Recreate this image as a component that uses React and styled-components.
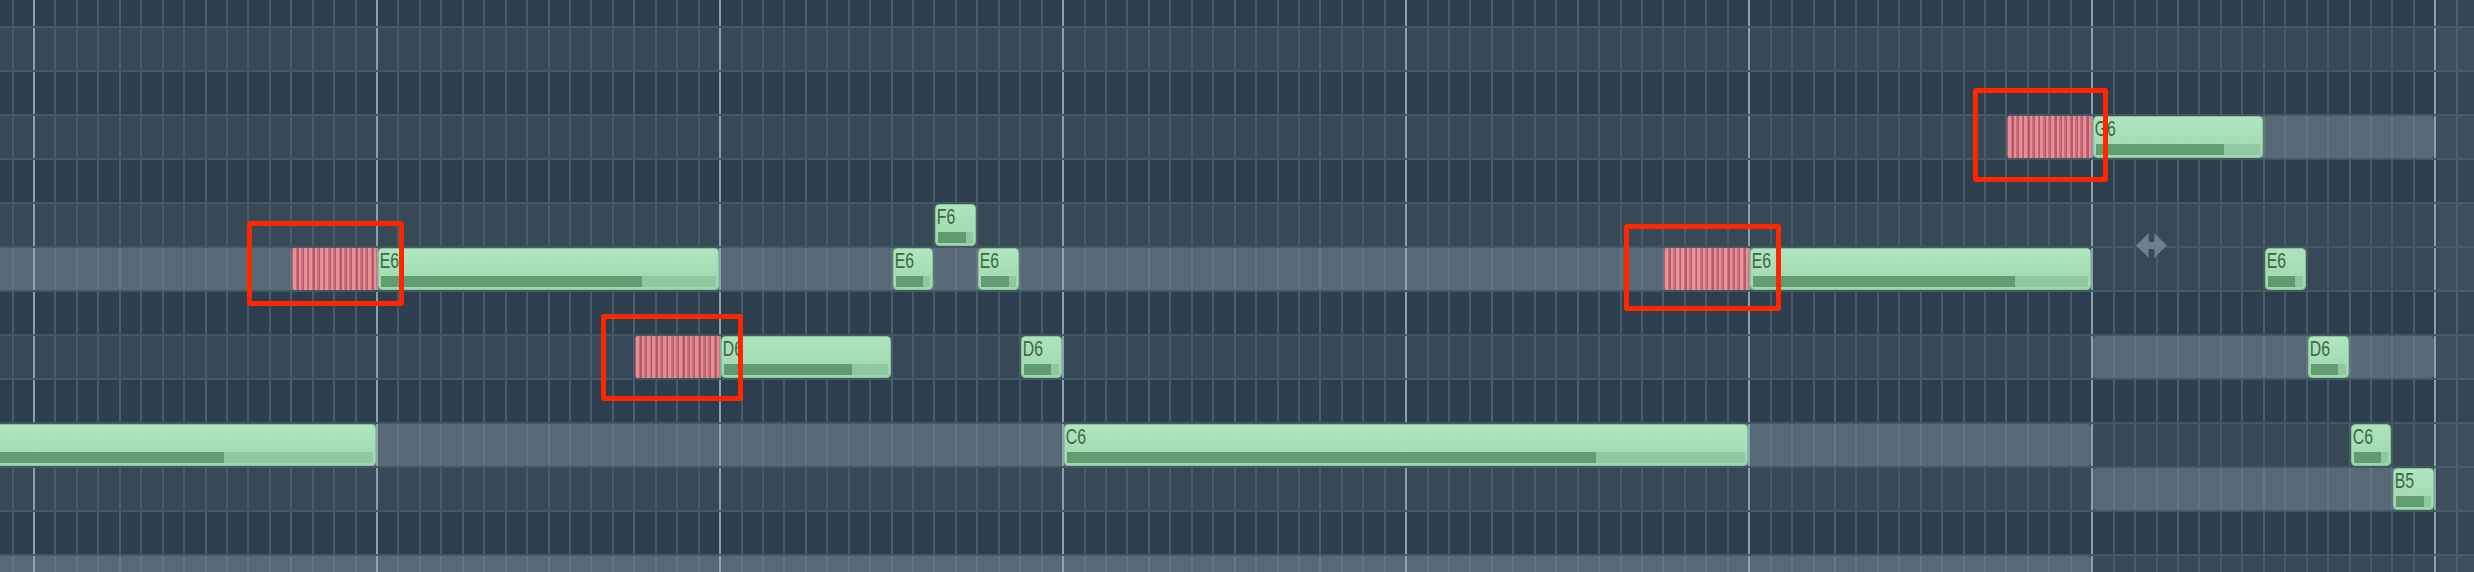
import React from "react";
import styled, { createGlobalStyle } from "styled-components";

// piano roll geometry (px)
const STEP = 21.44;
const ORIGIN = 34; // first bar line
const ROW_H = 44;
const FIRST_ROW = -18;
const PATTERN_END = 112; // in steps

const xAt = (s) => ORIGIN + s * STEP;

const ROWS = [
  { name: "A#6", black: true },
  { name: "A6" },
  { name: "G#6", black: true },
  { name: "G6" },
  { name: "F#6", black: true },
  { name: "F6" },
  { name: "E6" },
  { name: "D#6", black: true },
  { name: "D6" },
  { name: "C#6", black: true },
  { name: "C6" },
  { name: "B5" },
  { name: "A#5", black: true },
  { name: "A5" },
];

const NOTES = [
  { key: "C6", from: -16, len: 32 },
  { key: "E6", from: 16, len: 16 },
  { key: "D6", from: 32, len: 8 },
  { key: "E6", from: 40, len: 2 },
  { key: "F6", from: 42, len: 2 },
  { key: "E6", from: 44, len: 2 },
  { key: "D6", from: 46, len: 2 },
  { key: "C6", from: 48, len: 32 },
  { key: "E6", from: 80, len: 16 },
  { key: "G6", from: 96, len: 8 },
  { key: "E6", from: 104, len: 2 },
  { key: "D6", from: 106, len: 2 },
  { key: "C6", from: 108, len: 2 },
  { key: "B5", from: 110, len: 2 },
];

const GHOSTS = [
  { key: "E6", from: -16, to: 96 },
  { key: "C6", from: -16, to: 96 },
  { key: "A5", from: -16, to: 96 },
  { key: "G6", from: 96, to: 112 },
  { key: "D6", from: 96, to: 112 },
  { key: "B5", from: 96, to: 112 },
];

const SLIDES = [
  { key: "E6", from: 12 },
  { key: "D6", from: 28 },
  { key: "E6", from: 76 },
  { key: "G6", from: 92 },
];

// annotation boxes drawn over the roll
const MARKS = [
  { x: 247, y: 221, w: 157, h: 85 },
  { x: 601, y: 314, w: 142, h: 87 },
  { x: 1624, y: 224, w: 157, h: 87 },
  { x: 1973, y: 88, w: 135, h: 94 },
];

const GlobalStyle = createGlobalStyle`
  html, body {
    margin: 0;
    padding: 0;
    background: #2e404f;
    overflow: hidden;
  }
  #root {
    height: 572px;
  }
`;

const Roll = styled.div`
  position: relative;
  width: 2474px;
  height: 572px;
  overflow: hidden;
`;

const Keys = styled.div`
  display: flex;
  flex-direction: column;
  margin-top: ${FIRST_ROW}px;
`;

const Row = styled.div`
  position: relative;
  box-sizing: border-box;
  height: ${ROW_H}px;
  border-top: 2px solid #445765;
  background-color: ${(p) => (p.$black ? "#2d3f4e" : "#374957")};
  background-image:
    repeating-linear-gradient(to right, transparent 0 33px, #8ca1b0 33px 35px, transparent 35px 343.04px),
    repeating-linear-gradient(to right, transparent 0 33px, #53677540 33px 35px, transparent 35px 85.76px),
    repeating-linear-gradient(to right, transparent 0 11.56px, #485b69 11.56px 13.56px, transparent 13.56px 21.44px);
`;

const OutOfPattern = styled.div`
  position: absolute;
  top: 0;
  bottom: 0;
  left: ${xAt(PATTERN_END) + 2}px;
  right: 0;
  background: rgba(255, 255, 255, 0.035);
`;

const Ghost = styled.div`
  position: absolute;
  top: 0;
  bottom: 0;
  border-radius: 4px;
  background: rgba(152, 168, 178, 0.34);
`;

const Note = styled.div`
  position: absolute;
  top: 0;
  bottom: 0;
  box-sizing: border-box;
  border: 1px solid #8acb99;
  border-radius: 4px;
  background: linear-gradient(#b4edc4, #a3deb3);
  opacity: 0.95;
  overflow: hidden;
`;

const Label = styled.span`
  display: block;
  padding: 1px 0 0 1px;
  font-family: "Liberation Sans", Arial, sans-serif;
  font-size: 22px;
  line-height: 1;
  color: #42683e;
  transform: scaleX(0.72);
  transform-origin: left top;
  white-space: nowrap;
`;

const Velocity = styled.div`
  position: absolute;
  left: 2px;
  right: 2px;
  bottom: 2px;
  height: 11px;
  background: #94cfa3;
`;

const VelocityFill = styled.div`
  height: 100%;
  background: #63a071;
`;

const Slide = styled.div`
  position: absolute;
  top: 0;
  bottom: 0;
  border-radius: 3px;
  opacity: 0.92;
  background: repeating-linear-gradient(
    to right,
    #c05a67 0 1.3px,
    #f3959e 1.3px 3.8px,
    #d2717c 3.8px 5.36px
  );
`;

const Mark = styled.div`
  position: absolute;
  box-sizing: border-box;
  border: 5px solid #ff2600;
  border-radius: 3px;
`;

const Cursor = styled.svg`
  position: absolute;
  left: 2136px;
  top: 233px;
`;

const span = (from, to, inset = 2) => ({
  left: xAt(from) + 1,
  width: (to - from) * STEP - inset,
});

const App = () => {
  return (
    <>
      <GlobalStyle />
      <Roll>
        <Keys>
          {ROWS.map((r) => (
            <Row key={r.name} $black={r.black}>
              {GHOSTS.filter((g) => g.key === r.name).map((g, i) => (
                <Ghost key={"g" + i} style={span(g.from, g.to)} />
              ))}
              {SLIDES.filter((s) => s.key === r.name).map((s, i) => (
                <Slide key={"s" + i} style={span(s.from, s.from + 4, 1)} />
              ))}
              {NOTES.filter((n) => n.key === r.name).map((n, i) => (
                <Note key={"n" + i} style={span(n.from, n.from + n.len)}>
                  {n.from >= 0 && <Label>{n.key}</Label>}
                  <Velocity>
                    <VelocityFill style={{ width: "78%" }} />
                  </Velocity>
                </Note>
              ))}
            </Row>
          ))}
        </Keys>
        <OutOfPattern />

        <Cursor width="31" height="25" viewBox="0 0 31 25">
          <path
            d="M0 12.5 L13 0 Q12 4.5 13 9 L18 9 Q19 4.5 18 0 L31 12.5 L18 25 Q19 20.5 18 16 L13 16 Q12 20.5 13 25 Z"
            fill="#6c808e"
          />
        </Cursor>

        {MARKS.map((m, i) => (
          <Mark
            key={"m" + i}
            style={{ left: m.x, top: m.y, width: m.w, height: m.h }}
          />
        ))}
      </Roll>
    </>
  );
};

export default App;
